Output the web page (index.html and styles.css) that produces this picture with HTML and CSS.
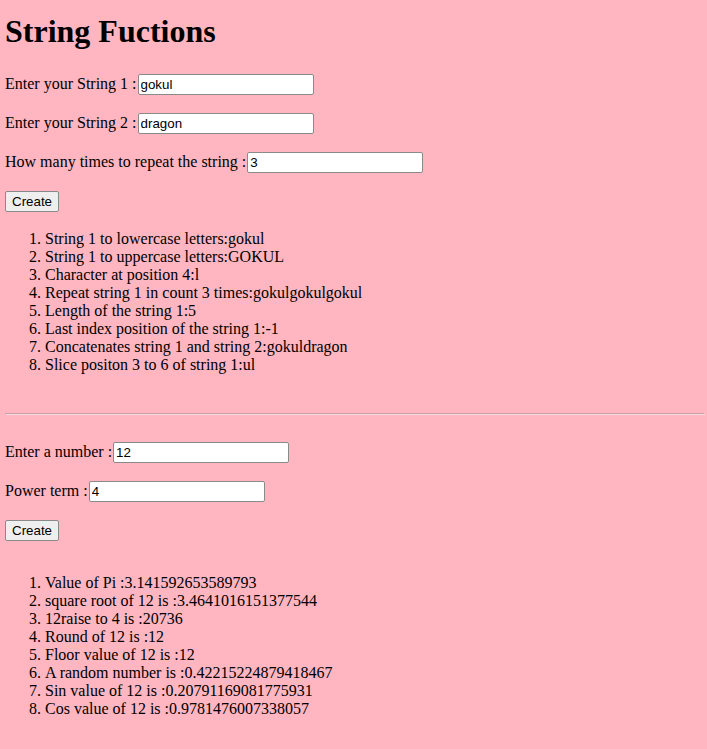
FILE: index.html
```html
<!DOCTYPE html>
<html>
<head>
<meta charset="utf-8">
<title>String Fuctions</title>
<link rel="stylesheet" href="styles.css">
</head>
<body class="page">
<h1 class="title">String Fuctions</h1>
<p class="row">Enter your String 1 :<input class="field" type="text" value="gokul"></p>
<p class="row">Enter your String 2 :<input class="field" type="text" value="dragon"></p>
<p class="row">How many times to repeat the string :<input class="field" type="text" value="3"></p>
<p class="row"><button class="btn" type="button">Create</button></p>
<ol class="results results-first">
<li>String 1 to lowercase letters:gokul</li>
<li>String 1 to uppercase letters:GOKUL</li>
<li>Character at position 4:l</li>
<li>Repeat string 1 in count 3 times:gokulgokulgokul</li>
<li>Length of the string 1:5</li>
<li>Last index position of the string 1:-1</li>
<li>Concatenates string 1 and string 2:gokuldragon</li>
<li>Slice positon 3 to 6 of string 1:ul</li>
</ol>
<hr class="divider">
<p class="row row-first">Enter a number :<input class="field" type="text" value="12"></p>
<p class="row">Power term :<input class="field" type="text" value="4"></p>
<p class="row"><button class="btn" type="button">Create</button></p>
<ol class="results results-second">
<li>Value of Pi :3.141592653589793</li>
<li>square root of 12 is :3.4641016151377544</li>
<li>12raise to 4 is :20736</li>
<li>Round of 12 is :12</li>
<li>Floor value of 12 is :12</li>
<li>A random number is :0.42215224879418467</li>
<li>Sin value of 12 is :0.20791169081775931</li>
<li>Cos value of 12 is :0.9781476007338057</li>
</ol>
</body>
</html>
```
FILE: styles.css
```css
html {
  background: #ffb6c1;
}
.page {
  margin: 0 2px 0 5px;
  padding-top: 1px;
  background: #ffb6c1;
  color: #000;
  font-family: "Liberation Serif", "Times New Roman", serif;
  font-size: 16px;
}
.title {
  font-size: 32px;
  font-weight: bold;
  margin: 12px 0 24px;
}
.row {
  margin: 18px 0;
}
.field {
  box-sizing: border-box;
  width: 176px;
  height: 21px;
  margin: 0 0 0 1px;
  padding: 1px 2px;
  border: 1px solid #8a8a8a;
  border-radius: 2px;
  background: #fff;
  color: #000;
  font-family: "Liberation Sans", Arial, sans-serif;
  font-size: 13.333px;
  vertical-align: baseline;
}
.btn {
  box-sizing: border-box;
  height: 21px;
  margin: 0;
  padding: 1px 6px;
  border: 1px solid #8a8a8a;
  border-radius: 2px;
  background: #efefef;
  color: #000;
  font-family: "Liberation Sans", Arial, sans-serif;
  font-size: 13.333px;
}
.results {
  margin: 18px 0;
  padding-left: 40px;
}
.results-first {
  margin-bottom: 39px;
}
.results-second {
  margin-top: 33px;
}
.divider {
  margin: 0;
  height: 0;
  border-style: solid;
  border-width: 1px;
  border-color: #c8a0a8 #f4dde1 #f4dde1 #c8a0a8;
}
.row-first {
  margin-top: 27px;
}
```
